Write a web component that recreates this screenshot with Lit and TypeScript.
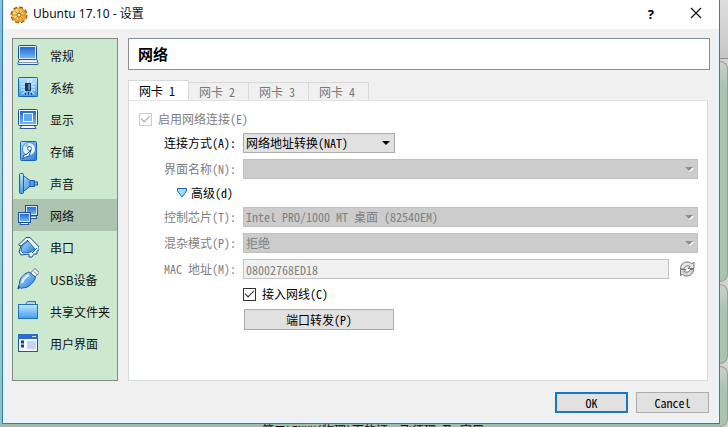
import { LitElement, html, css, svg, nothing } from "lit";
import { customElement, property, state } from "lit/decorators.js";
import { classMap } from "lit/directives/class-map.js";

const gradients = svg`
  <defs>
    <linearGradient id="blue" x1="0" y1="0" x2="1" y2="1">
      <stop offset="0" stop-color="#b9e0fb" /><stop offset="1" stop-color="#1f78dc" />
    </linearGradient>
    <linearGradient id="deep" x1="0" y1="0" x2="0" y2="1">
      <stop offset="0" stop-color="#2468d4" /><stop offset="1" stop-color="#6fb4f6" />
    </linearGradient>
    <linearGradient id="pale" x1="0" y1="0" x2="0" y2="1">
      <stop offset="0" stop-color="#c2e6fc" /><stop offset="1" stop-color="#3f9eec" />
    </linearGradient>
  </defs>`;

const icons = {
  general: svg`
    <path d="M2.500 14.500h17l1.500 4.500v1.500h-20v-1.500z" fill="#eef3fa" stroke="#31598f" />
    <path d="M1 18.500h20" stroke="#7c98bd" />
    <rect x="1.500" y="1.500" width="18" height="14" rx="1" fill="#dcecfb" stroke="#1f4f92" />
    <rect x="3" y="3" width="15" height="11" fill="url(#deep)" />`,
  system: svg`
    <rect x="1" y="1" width="20" height="20" rx="1" fill="url(#pale)" />
    <rect x="1.500" y="1.500" width="19" height="19" rx="1" fill="none" stroke="#1763b8" />
    <path d="M4 8h4M4 11h4M4 14h4M5 18l4-3M11 3v4M14 3v4M18 7l-4 2M18 11h-4M18 14h-4M17 18l-3-3" stroke="#e4f4ff" fill="none" />
    <rect x="8" y="7" width="6" height="8" fill="#17365f" />
    <path d="M12 8v6" stroke="#5f86b3" stroke-width="2" />
    <path d="M8.500 17v2M11.500 16v3M14.500 17v2" stroke="#1b5090" />`,
  display: svg`
    <path d="M5 17h12l2 3.500H3z" fill="#f2f5fa" stroke="#31598f" />
    <rect x="1.500" y="1.500" width="19" height="16" rx="1" fill="#f5f9fd" stroke="#1f4f92" />
    <rect x="3" y="3" width="16" height="13" fill="url(#deep)" />
    <rect x="6.500" y="5.500" width="9" height="8" fill="#5ea8f0" stroke="#fff" />`,
  storage: svg`
    <rect x="3.500" y="1.500" width="16" height="19" rx="1" fill="url(#blue)" stroke="#1763b8" />
    <circle cx="12" cy="9" r="6.500" fill="#e3f3fd" stroke="#4a8bcc" />
    <path d="M7 6a6 6 0 0 1 4-3l1 5z" fill="#8ec8f2" />
    <circle cx="12.500" cy="8.500" r="2" fill="#fff" stroke="#2d6fb8" />
    <path d="M5.500 19l1.500-4 3-1 4-4-2 6-3 1z" fill="#fff" stroke="#1f5ba5" />`,
  audio: svg`
    <path d="M5.500 3L13 8.500h4.500v6H13L5.500 20z" fill="url(#blue)" stroke="#1a5dab" />
    <rect x="2.500" y="1.500" width="4" height="20" rx="1" fill="url(#pale)" stroke="#1a5dab" />
    <path d="M13 9v6" stroke="#2464b0" />
    <rect x="17.500" y="10" width="3" height="3" fill="#7cc0f2" stroke="#1a5dab" />`,
  network: svg`
    <path d="M14 12h5l1 2.500h-7z" fill="#e8f2fb" stroke="#31598f" />
    <rect x="8.500" y="1.500" width="12" height="10" fill="#cfe5fa" stroke="#1f4f92" />
    <rect x="10" y="3" width="9" height="7" fill="url(#deep)" />
    <path d="M4 18h7l1 2.500H3z" fill="#e8f2fb" stroke="#31598f" />
    <rect x="1.500" y="8.500" width="12" height="10" fill="#cfe5fa" stroke="#1f4f92" />
    <rect x="3" y="10" width="9" height="7" fill="url(#deep)" />`,
  serial: svg`
    <path d="M1.500 9L9 1.500h4L22 11v3l-2 1v3h-3l-2 3h-3v-3l-8 1-2-3 2-6z" fill="#eaf6fd" stroke="#1f4a80" />
    <path d="M11 5l7 8-4 3-8 1-2-2 1-5z" fill="url(#blue)" stroke="#2371c2" />
    <path d="M4 10l7-6" stroke="#1f5593" />
    <path d="M15 17l5-5" stroke="#1f5593" />`,
  usb: svg`
    <path d="M13.500 5L18 .5l4 4L18 9z" fill="#fff" stroke="#5c6c82" />
    <path d="M17 3.500l1.500 1.500M19 5.500l1 1" stroke="#445" />
    <path d="M12 4c-4 1-8 5-9 8-1 3 0 4-1.500 6l2.500 2.500c2-1.500 5 0 8-2.500 4-3 6-6 6.500-9z" fill="url(#blue)" stroke="#1f5ba5" />
    <path d="M2.500 18l-1.500 3" stroke="#1f5ba5" stroke-width="2" />
    <path d="M12 7c-4 2-6 4-7 8" stroke="#e1f3fe" fill="none" stroke-width="2" />`,
  folder: svg`
    <path d="M1.500 4.500h7l2-3h8v3h2v14h-19z" fill="#a9d9fa" stroke="#2371c2" />
    <rect x="1.500" y="4.500" width="19" height="14" fill="url(#pale)" stroke="#2371c2" />`,
  ui: svg`
    <rect x="1.500" y="2.500" width="19" height="17" fill="#f3f8fe" stroke="#1b56a8" stroke-width="1" />
    <rect x="1" y="2" width="20" height="5" fill="#2a6cc8" />
    <path d="M15 4.500h4" stroke="#cfe3fa" />
    <rect x="10" y="9" width="9" height="8" fill="#c3d5f3" />
    <path d="M4 10h3M4 14h3" stroke="#1b3f7a" stroke-width="3" />`,
};

type IconName = keyof typeof icons;

const sections: { icon: IconName; label: string }[] = [
  { icon: "general", label: "常规" },
  { icon: "system", label: "系统" },
  { icon: "display", label: "显示" },
  { icon: "storage", label: "存储" },
  { icon: "audio", label: "声音" },
  { icon: "network", label: "网络" },
  { icon: "serial", label: "串口" },
  { icon: "usb", label: "USB设备" },
  { icon: "folder", label: "共享文件夹" },
  { icon: "ui", label: "用户界面" },
];

@customElement("section-icon")
class SectionIcon extends LitElement {
  @property() name: IconName = "general";
  static styles = css`
    :host { display: block; width: 22px; height: 22px; flex: none; }
    svg { display: block; }
  `;
  render() {
    return html`<svg width="22" height="22" viewBox="0 0 22 22" aria-hidden="true">${gradients}${icons[this.name]}</svg>`;
  }
}

@customElement("settings-nav")
class SettingsNav extends LitElement {
  @state() current = 5;
  static styles = css`
    :host {
      display: block;
      box-sizing: border-box;
      border: 1px solid #7f8c83;
      background: #cce8cf;
    }
    button {
      display: flex;
      align-items: center;
      gap: 11px;
      width: 100%;
      height: 32px;
      padding: 0 4px;
      border: 0;
      background: none;
      color: #101010;
      font: 12px "Noto Sans CJK SC", sans-serif;
      white-space: nowrap;
    }
    .current { background: #adc5b0; }
  `;
  render() {
    return html`${sections.map(
      (s, i) => html`<button class=${classMap({ current: i === this.current })} @click=${() => (this.current = i)}>
        <section-icon name=${s.icon}></section-icon><span>${s.label}</span>
      </button>`
    )}`;
  }
}

@customElement("network-page")
class NetworkPage extends LitElement {
  @state() tab = 0;
  static styles = css`
    :host {
      display: flex;
      flex-direction: column;
      min-width: 0;
      font: 12px/16px "Noto Sans Mono CJK SC", "Noto Sans CJK SC", monospace;
      color: #000;
    }
    h1 {
      margin: 0;
      padding: 0 9px;
      border: 1px solid #868e96;
      background: #fff;
      font: bold 15px/30px "Noto Sans CJK SC", sans-serif;
    }
    .tabs {
      display: flex;
      align-items: flex-end;
      margin-top: 10px;
    }
    .tabs button {
      width: 60px;
      height: 18px;
      padding: 0 0 0 10px;
      border: 1px solid #d9d9d9;
      border-left-width: 0;
      border-bottom: 0;
      background: #f0f0f0;
      color: #787878;
      font: inherit;
      text-align: left;
    }
    .tabs .active {
      width: 61px;
      height: 20px;
      border-left-width: 1px;
      background: #fff;
      color: #000;
    }
    .panel {
      flex: 1;
      box-sizing: border-box;
      margin-right: 2px;
      padding: 8px 9px 50px 10px;
      border: 1px solid #d5dade;
      border-top-color: #e4e4e4;
      background: #fff;
    }
    .form {
      display: grid;
      grid-template-columns: 97px 1fr 22px;
      gap: 6px 7px;
      align-items: center;
      margin-top: 4px;
    }
    .label { grid-column: 1; text-align: right; white-space: nowrap; }
    .off { color: #808080; }
    .wide { grid-column: 2 / 4; }
    .check { display: flex; align-items: center; gap: 6px; height: 20px; }
    .field { grid-column: 2; }
    .check.field { height: 18px; }
    input[type="checkbox"] {
      appearance: none;
      display: grid;
      place-items: center;
      width: 13px;
      height: 13px;
      margin: 0;
      border: 1px solid #333;
      background: #fff;
    }
    input[type="checkbox"]:checked::before {
      content: "";
      width: 9px;
      height: 5px;
      margin-bottom: 3px;
      border: solid #222;
      border-width: 0 0 1px 1px;
      box-sizing: border-box;
      rotate: -45deg;
    }
    input[type="checkbox"]:disabled { border-color: #ccc; }
    input[type="checkbox"]:disabled::before { border-color: #a0a0a0; }
    .combo { position: relative; display: block; }
    .short { width: 152px; }
    select {
      appearance: none;
      display: block;
      box-sizing: border-box;
      width: 100%;
      height: 20px;
      margin: 0;
      padding: 0 2px;
      border: 1px solid #adadad;
      border-radius: 0;
      background: #e1e1e1;
      color: #000;
      font: inherit;
      opacity: 1;
    }
    select:disabled { background: #ccc; border-color: #bfbfbf; color: #808080; }
    .arrow {
      position: absolute;
      right: 5px;
      top: 8px;
      border: 4px solid transparent;
      border-top-color: #000;
      border-bottom: 0;
    }
    select:disabled + .arrow { border-top-color: #8c8c8c; filter: drop-shadow(1px 1px 0 #fff); }
    .toggle {
      grid-column: 1 / 4;
      display: flex;
      align-items: center;
      gap: 3px;
      height: 16px;
      margin-left: 37px;
      padding: 0;
      border: 0;
      background: none;
      color: #000;
      font: inherit;
    }
    input[type="text"] {
      box-sizing: border-box;
      width: 100%;
      height: 20px;
      padding: 0 2px;
      border: 1px solid #c4c4c4;
      background: #f0f0f0;
      color: #808080;
      font: inherit;
    }
    .refresh { padding: 0; border: 0; background: none; height: 18px; }
    .refresh svg { display: block; margin: 0 auto; }
    .forward {
      display: block;
      width: 150px;
      height: 21px;
      margin-left: 1px;
      padding: 0;
      border: 1px solid #adadad;
      background: #e1e1e1;
      color: #000;
      font: inherit;
    }
  `;
  combo(id: string, label: string, value: string, disabled: boolean) {
    return html`<label class="label ${disabled ? "off" : ""}" for=${id}>${label}</label>
      <span class="combo wide ${disabled ? "" : "short"}">
        <select id=${id} ?disabled=${disabled}>${value ? html`<option>${value}</option>` : nothing}</select>
        <span class="arrow"></span>
      </span>`;
  }
  render() {
    return html`
      <h1>网络</h1>
      <div class="tabs" role="tablist">
        ${[1, 2, 3, 4].map(
          (n, i) => html`<button role="tab" aria-selected=${i === this.tab} class=${classMap({ active: i === this.tab })}
            @click=${() => (this.tab = i)}>网卡 ${n}</button>`
        )}
      </div>
      <div class="panel">
        <label class="check off"><input type="checkbox" checked disabled />启用网络连接(E)</label>
        <div class="form">
          ${this.combo("attach", "连接方式(A):", "网络地址转换(NAT)", false)}
          ${this.combo("iface", "界面名称(N):", "", true)}
          <button class="toggle">
            <svg width="12" height="12" viewBox="0 0 12 12" aria-hidden="true">
              <path d="M1.500 1.500h9v2.500L6 10 1.500 4z" fill="#a5dbfa" stroke="#1c69b5" />
            </svg>高级(d)
          </button>
          ${this.combo("chip", "控制芯片(T):", "Intel PRO/1000 MT 桌面 (82540EM)", true)}
          ${this.combo("promisc", "混杂模式(P):", "拒绝", true)}
          <label class="label off" for="mac">MAC 地址(M):</label>
          <input id="mac" type="text" value="08002768ED18" disabled />
          <button class="refresh" aria-label="刷新" disabled>
            <svg width="16" height="16" viewBox="0 0 16 16" fill="none" stroke="#747474" aria-hidden="true">
              <path d="M1.500 8C1.500 3.500 4.500 1 8 1c2 0 3.500.5 4.500 1.500L15 1.500V7.500H9l2-2C8 4 5.500 5.500 5 8z" fill="#e4e4e4" />
              <path d="M14.500 8.500C14.500 12.500 11.500 15 8 15c-2 0-3.500-.5-4.500-1.500L1.500 14.500V8.500H7l-2 2c3 1.500 5.500 0 6-2z" fill="#d4d4d4" />
            </svg>
          </button>
          <label class="check field"><input type="checkbox" checked />接入网线(C)</label>
          <div class="field"><button class="forward">端口转发(P)</button></div>
        </div>
      </div>
    `;
  }
}

@customElement("app-root")
class AppRoot extends LitElement {
  static styles = css`
    :host {
      display: grid;
      grid-template-columns: 2px 1fr 8px;
      grid-template-rows: auto 1fr;
      height: 100vh;
      overflow: hidden;
      background: #9dbfaa;
      font: 12px/16px "Noto Sans Mono CJK SC", "Noto Sans CJK SC", monospace;
    }
    .edge { background: linear-gradient(#8fc3e2, #7fb0d8 20%, #a7cfd8 40%, #8fc0c4); }
    .window {
      display: flex;
      flex-direction: column;
      border: 1px solid #2f7fb0;
      border-top: 0;
      background: #f0f0f0;
    }
    header {
      display: flex;
      align-items: center;
      height: 29px;
      padding: 0 15px 0 7px;
      background: #fff;
    }
    .title {
      flex: 1;
      margin: 0 5px;
      padding-bottom: 2px;
      font: 12px/18px "Noto Sans", "Noto Sans CJK SC", sans-serif;
      color: #111;
    }
    header button { display: block; padding: 0; border: 0; background: none; color: #000; }
    header button.help { margin-right: 34px; padding-bottom: 2px; font: bold 13px/18px "Noto Sans", sans-serif; }
    .body {
      display: grid;
      grid-template-columns: 106px 1fr;
      gap: 10px;
      padding: 9px 5px 0 5px;
      border: solid #e9f3fb;
      border-width: 0 4px 0 4px;
    }
    footer {
      display: flex;
      justify-content: flex-end;
      gap: 8px;
      padding: 11px 6px 6px;
      border: solid #e9f3fb;
      border-width: 0 4px 4px;
    }
    footer button {
      width: 73px;
      height: 21px;
      padding: 0;
      border: 1px solid #adadad;
      background: #e1e1e1;
      color: #000;
      font: inherit;
    }
    footer .default { border: 2px solid #1777c4; }
    .backdrop {
      display: flex;
      flex-direction: column;
      gap: 2px;
      grid-row: 1 / 3;
      grid-column: 3;
      background: #d4d4d0;
    }
    .strip { height: 58px; border-bottom: 1px solid #8f8f8f; background: linear-gradient(#ddd, #c6c6c6); }
    .card {
      border: solid #94a198;
      border-width: 1px 1px 1px 0;
      border-radius: 0 8px 8px 0;
      background: linear-gradient(#cfcfcf, #a9c3af 24px);
    }
    .tall { flex: 223; }
    .mid { flex: 79; }
    .low { flex: 60; }
    .behind { grid-column: 1 / 3; overflow: hidden; height: 3px; padding-left: 262px; line-height: 12px; white-space: nowrap; color: #111; }
  `;
  render() {
    return html`
      <div class="edge"></div>
      <main class="window">
        <header>
          <svg width="18" height="18" viewBox="0 0 18 18" aria-hidden="true">
            <circle cx="9" cy="9" r="7" fill="none" stroke="#8a5208" stroke-width="3" stroke-dasharray="3.600 1.900" />
            <circle cx="9" cy="9" r="7" fill="#f2a92c" stroke="#e79a1f" />
            <circle cx="8" cy="8" r="5" fill="#fbd484" />
            <path d="M9 3v12M3 9h12M5 5l8 8M13 5l-8 8" stroke="#d18a20" />
            <circle cx="9" cy="9" r="2" fill="#fff3d0" stroke="#a8600c" />
          </svg>
          <span class="title">Ubuntu 17.10 - 设置</span>
          <button class="help" aria-label="帮助">?</button>
          <button aria-label="关闭">
            <svg width="16" height="12" viewBox="0 0 16 12"><path d="M3 1l10 10M13 1L3 11" stroke="#111" stroke-width="1.200" /></svg>
          </button>
        </header>
        <div class="body">
          <settings-nav></settings-nav>
          <network-page></network-page>
        </div>
        <footer>
          <button class="default">OK</button>
          <button>Cancel</button>
        </footer>
      </main>
      <div class="behind">第二LINUX(物理)下的证: 飞须理 及 官用</div>
      <div class="backdrop">
        <div class="strip"></div>
        <div class="card tall"></div>
        <div class="card mid"></div>
        <div class="card low"></div>
      </div>
    `;
  }
}
